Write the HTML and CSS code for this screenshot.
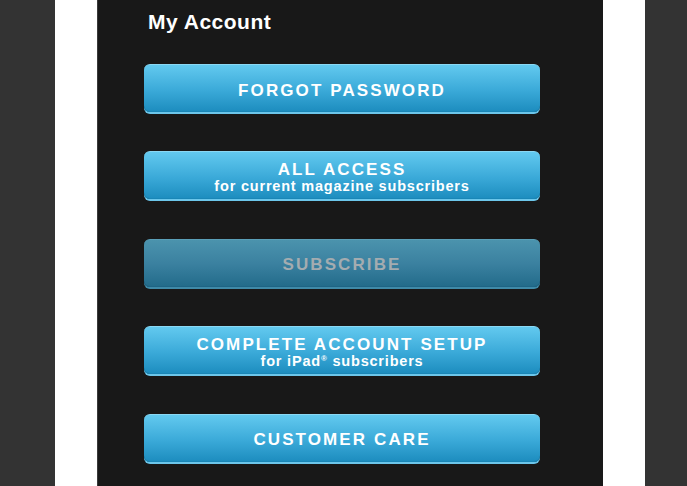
FILE: index.html
```html
<!DOCTYPE html>
<html>
<head>
<meta charset="utf-8">
<link rel="stylesheet" href="styles.css">
</head>
<body>
<div class="frame">
  <div class="side"></div>
  <div class="gutter"></div>
  <main class="panel">
    <h1 class="title">My Account</h1>
    <div class="buttons">
      <a class="btn"><span class="main">FORGOT PASSWORD</span></a>
      <a class="btn"><span class="main">ALL ACCESS</span><span class="sub">for current magazine subscribers</span></a>
      <a class="btn disabled"><span class="main">SUBSCRIBE</span></a>
      <a class="btn"><span class="main">COMPLETE ACCOUNT SETUP</span><span class="sub">for iPad<sup>®</sup> subscribers</span></a>
      <a class="btn"><span class="main">CUSTOMER CARE</span></a>
    </div>
  </main>
  <div class="gutter"></div>
  <div class="side"></div>
</div>
</body>
</html>
```
FILE: styles.css
```css
* { box-sizing: border-box; }
html, body { margin: 0; padding: 0; height: 100%; }
body { background: #333333; font-family: "Liberation Sans", Arial, sans-serif; overflow: hidden; }
.frame { display: flex; height: 486px; width: 687px; }
.side { width: 55px; background: #333333; flex: none; }
.gutter { width: 42px; background: #ffffff; flex: none; }
.panel {
  width: 506px; flex: none; background: #181818;
  border-left: 1px solid #3a3a3a;
  padding: 0 63px 0 46px;
}
.title {
  margin: 0; padding: 10px 0 0 4px; height: 64px;
  color: #fff; font-size: 21px; font-weight: bold; letter-spacing: 0.5px;
  line-height: 24px;
}
.buttons { display: flex; flex-direction: column; gap: 39.4px; }
.btn {
  display: flex; flex-direction: column; align-items: center; justify-content: center;
  height: 48px; border-radius: 6px;
  background: linear-gradient(#62c9ef 0%, #3aa9d8 55%, #1c8cbe 100%);
  border-top: 1px solid #8ad8f4;
  box-shadow: 0 2px 0 #6cc6ea, inset 0 -1px 0 #1a86b6;
  color: #fff; text-decoration: none;
  padding-top: 3px;
}
.main { font-size: 17px; font-weight: bold; letter-spacing: 2.1px; line-height: 17px; }
.sub { font-size: 14.5px; font-weight: bold; letter-spacing: 0.8px; line-height: 16px; }
.sub sup { font-size: 8px; vertical-align: 5px; line-height: 0; }
.btn.disabled {
  background: linear-gradient(#4b93ad 0%, #3b81a0 50%, #226b8a 100%);
  border-top: 1px solid #5a9fb8;
  box-shadow: 0 2px 0 #3f8aa8, inset 0 -1px 0 #1f6585;
  color: #a4acb0;
}
```
